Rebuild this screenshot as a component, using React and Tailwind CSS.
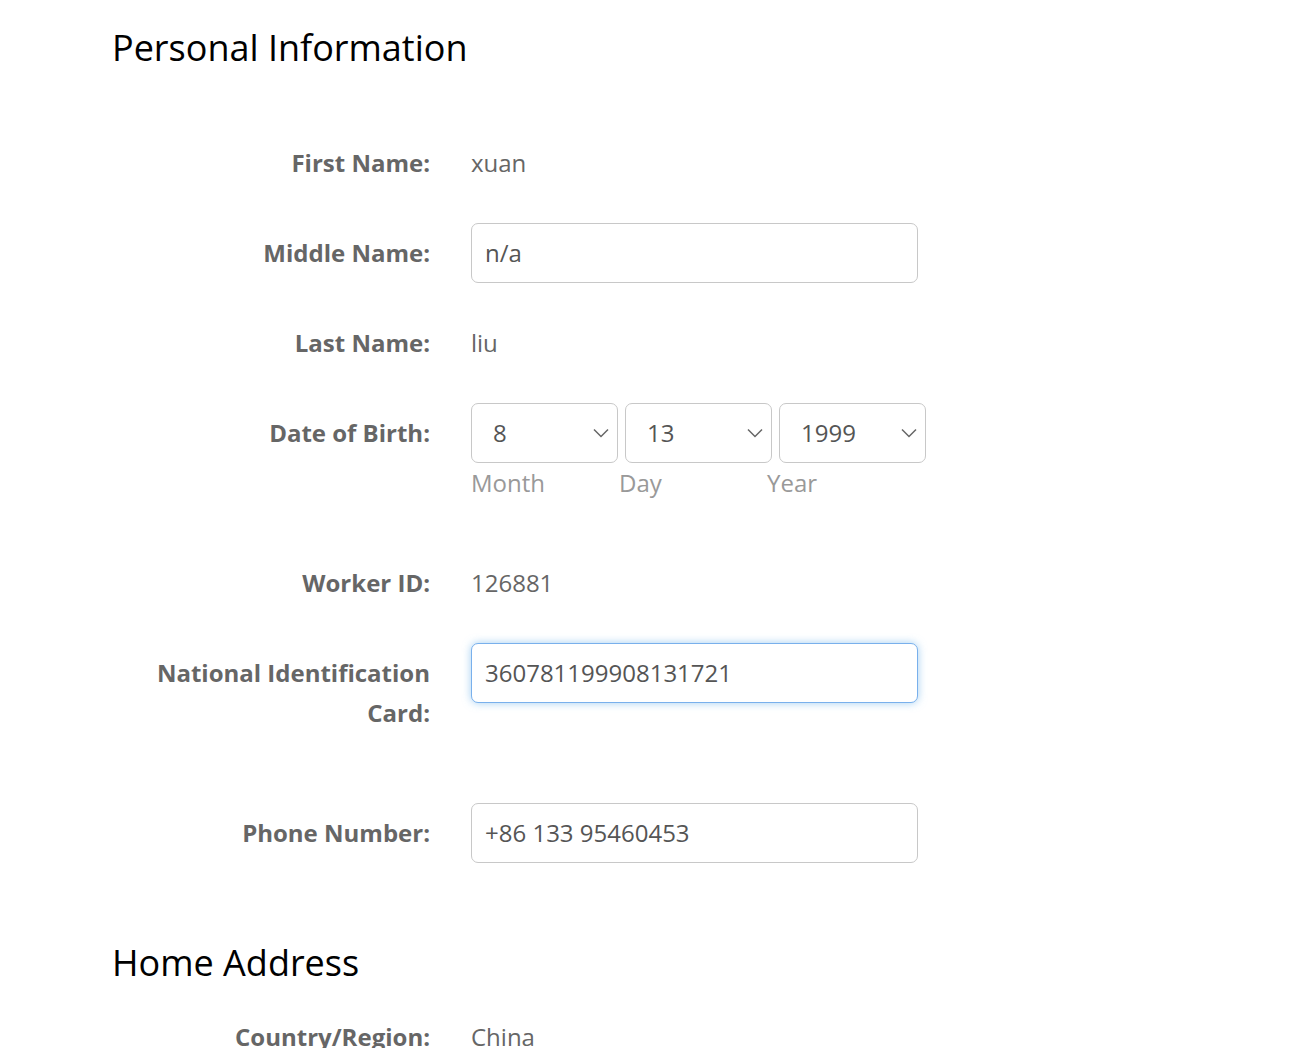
import React from 'react';

const font = { fontFamily: '"Open Sans", "Liberation Sans", sans-serif' };

const Label = ({ children }) => (
  <div className="text-right text-[24px] leading-[40px] font-bold text-[#666]">{children}</div>
);

const Row = ({ label, children, className = '' }) => (
  <div className={`grid grid-cols-[318px_447px] gap-x-[41px] ${className}`}>
    <div className="min-h-[60px] pt-[10px]">
      <Label>{label}</Label>
    </div>
    <div>{children}</div>
  </div>
);

const Value = ({ children }) => (
  <div className="flex h-[60px] items-center text-[24px] text-[#666]">{children}</div>
);

const TextInput = ({ value, focused }) => (
  <div
    className={`flex h-[60px] w-[447px] items-center rounded-[7px] border bg-white px-[13px] text-[24px] text-[#555] ${
      focused
        ? 'border-[#79b0ec] shadow-[0_0_8px_rgba(102,175,233,0.6)]'
        : 'border-[#c8c8c8]'
    }`}
  >
    {value}
  </div>
);

const Chevron = () => (
  <svg width="16" height="10" viewBox="0 0 16 10" fill="none" stroke="#666" strokeWidth="1.5">
    <path d="M1 1.5l7 7 7-7" />
  </svg>
);

const Select = ({ value }) => (
  <div className="flex h-[60px] w-[147px] items-center justify-between rounded-[7px] border border-[#c8c8c8] bg-white pl-[21px] pr-[8px] text-[24px] text-[#555]">
    <span>{value}</span>
    <Chevron />
  </div>
);

export default function App() {
  return (
    <div className="min-h-screen bg-white pl-[112px]" style={font}>
      <h2 className="pt-[24px] text-[36px] leading-[48px] text-black">Personal Information</h2>

      <div className="mt-[61px] flex flex-col gap-[30px]">
        <Row label="First Name:">
          <Value>xuan</Value>
        </Row>
        <Row label="Middle Name:">
          <TextInput value="n/a" />
        </Row>
        <Row label="Last Name:">
          <Value>liu</Value>
        </Row>
        <div className="grid grid-cols-[318px_auto] gap-x-[41px]">
          <div className="pt-[10px]">
            <Label>Date of Birth:</Label>
          </div>
          <div>
            <div className="flex gap-[7px]">
              <Select value="8" />
              <Select value="13" />
              <Select value="1999" />
            </div>
            <div className="flex h-[40px] items-center text-[24px] text-[#999]">
              <span className="w-[148px]">Month</span>
              <span className="w-[148px]">Day</span>
              <span className="w-[148px]">Year</span>
            </div>
          </div>
        </div>
        <Row label="Worker ID:" className="mt-[20px]">
          <Value>126881</Value>
        </Row>
        <Row label={<>National Identification<br />Card:</>}>
          <TextInput value="360781199908131721" focused />
        </Row>
        <Row label="Phone Number:" className="mt-[40px]">
          <TextInput value="+86 133 95460453" />
        </Row>
      </div>

      <h2 className="mt-[76px] text-[36px] leading-[48px] text-black">Home Address</h2>

      <div className="mt-[20px] flex flex-col gap-[30px]">
        <Row label="Country/Region:">
          <Value>China</Value>
        </Row>
      </div>
    </div>
  );
}
